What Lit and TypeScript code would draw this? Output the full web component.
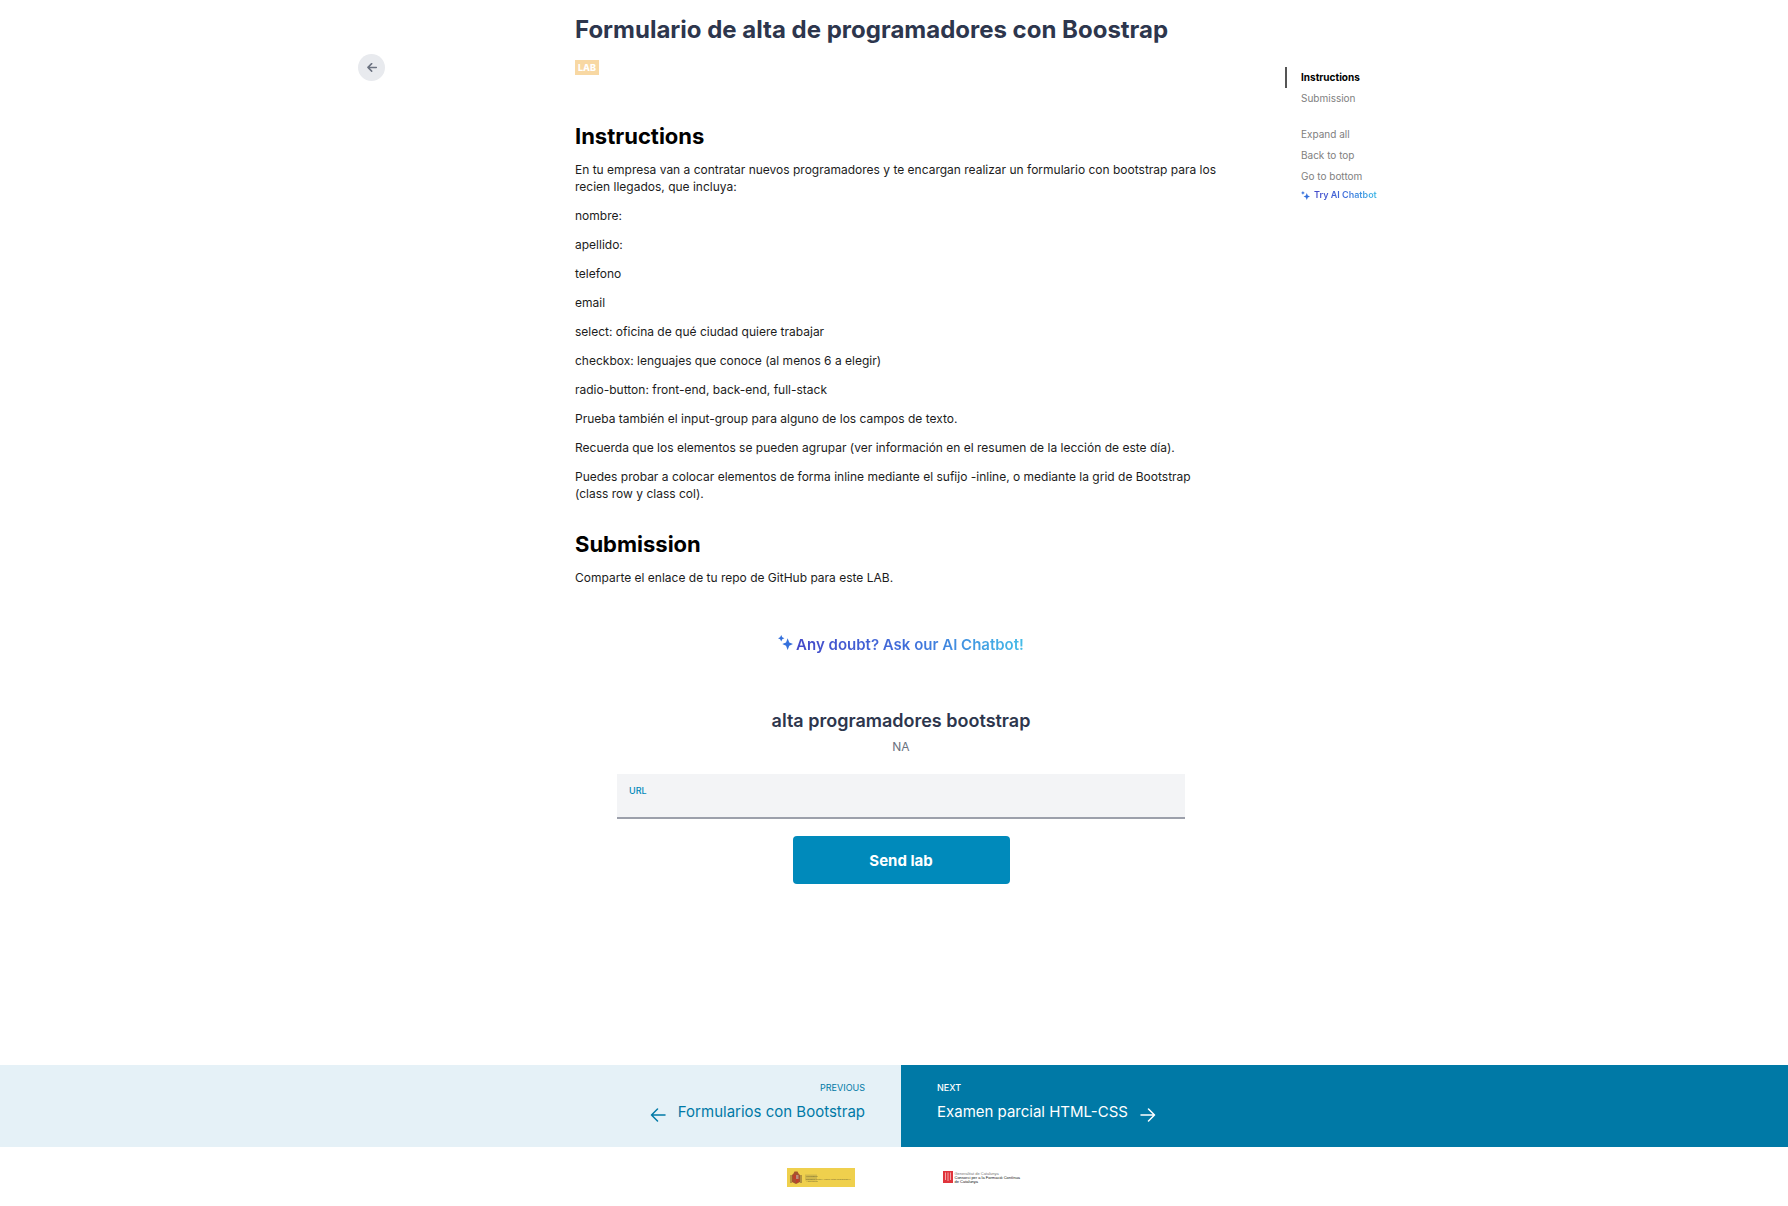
import { LitElement, html, css, svg } from "lit";
import { customElement, state } from "lit/decorators.js";

const TASKS = [
  "En tu empresa van a contratar nuevos programadores y te encargan realizar un formulario con bootstrap para los recien llegados, que incluya:",
  "nombre:",
  "apellido:",
  "telefono",
  "email",
  "select: oficina de qué ciudad quiere trabajar",
  "checkbox: lenguajes que conoce (al menos 6 a elegir)",
  "radio-button: front-end, back-end, full-stack",
  "Prueba también el input-group para alguno de los campos de texto.",
  "Recuerda que los elementos se pueden agrupar (ver información en el resumen de la lección de este día).",
  "Puedes probar a colocar elementos de forma inline mediante el sufijo -inline, o mediante la grid de Bootstrap (class row y class col).",
];

const arrow = (dir: "left" | "right") => html`
  <svg class="arrow" viewBox="0 0 16 16" aria-hidden="true">
    ${dir === "left"
      ? svg`<path d="M15 7H1.5M7.5 1L1.5 7L7.5 13" />`
      : svg`<path d="M1 7H14.5M8.5 1L14.5 7L8.5 13" />`}
  </svg>
`;

const sparkles = html`
  <svg class="sparkles" viewBox="0 0 14 14" aria-hidden="true">
    <path d="M9 3L10.5 7L14 8.5L10.5 10L9 14L7.5 10L4 8.5L7.5 7Z" />
    <path d="M3 0L4 2L6 3L4 4L3 6L2 4L0 3L2 2Z" />
  </svg>
`;

@customElement("app-root")
export class AppRoot extends LitElement {
  @state() private url = "";

  static styles = css`
    :host {
      display: block;
      font-family: Inter, "Liberation Sans", sans-serif;
      font-size: 12px;
      line-height: 17px;
      color: #1c1c1c;
      background: #fff;
    }
    * {
      box-sizing: border-box;
    }
    h1, h2, h3, p {
      margin: 0;
    }
    a {
      color: inherit;
      text-decoration: none;
    }
    button {
      font: inherit;
      border: 0;
      padding: 0;
      background: none;
      color: inherit;
      cursor: pointer;
    }
    .page {
      display: flex;
      flex-direction: column;
      min-height: 100vh;
    }
    .layout {
      flex: 1;
      display: grid;
      grid-template-columns: 1fr minmax(0, 652px) 1fr;
      padding-left: 14px;
    }
    .rail {
      display: flex;
      justify-content: flex-end;
      align-items: flex-start;
      padding: 54px 190px 0 0;
    }
    .back {
      display: grid;
      place-items: center;
      width: 27px;
      height: 27px;
      border-radius: 50%;
      background: #e8eaee;
      color: #6b7280;
    }
    .arrow {
      display: block;
      width: 16px;
      height: 16px;
      fill: none;
      stroke: currentColor;
      stroke-width: 1.5;
      stroke-linecap: round;
      stroke-linejoin: round;
    }
    .back .arrow {
      width: 10px;
      height: 10px;
      stroke-width: 2.4;
    }
    .content {
      display: flex;
      flex-direction: column;
      align-items: flex-start;
      padding-top: 14px;
    }
    h1 {
      font-size: 24px;
      line-height: 32px;
      font-weight: 700;
      color: #2d364d;
    }
    .badge {
      margin-top: 14px;
      padding: 0 3px;
      font-size: 9px;
      line-height: 15px;
      font-weight: 800;
      color: #fff;
      background: #f8d8a3;
    }
    .section {
      display: flex;
      flex-direction: column;
      gap: 12px;
    }
    h2 {
      font-size: 22px;
      line-height: 25px;
      font-weight: 700;
      color: #000;
    }
    .first {
      margin-top: 49px;
    }
    .second {
      margin-top: 30px;
    }
    .ai {
      display: inline-flex;
      align-items: flex-start;
      font-weight: 600;
    }
    .ai-text {
      color: transparent;
      background: linear-gradient(90deg, #4549c9, #3f6fdb 50%, #45bde8);
      background-clip: text;
      -webkit-background-clip: text;
    }
    .sparkles {
      flex: none;
      width: 15px;
      height: 15px;
      fill: #3470dc;
    }
    .ai-large {
      align-self: center;
      gap: 3px;
      margin-top: 49px;
      font-size: 15px;
      line-height: 20px;
    }
    .delivery {
      align-self: stretch;
      display: flex;
      flex-direction: column;
      align-items: center;
      margin-top: 54px;
      padding: 0 42px;
    }
    h3 {
      font-size: 18px;
      line-height: 24px;
      font-weight: 600;
      color: #2d364d;
    }
    .grade {
      margin-top: 5px;
      color: #6b7280;
    }
    .field {
      align-self: stretch;
      display: flex;
      flex-direction: column;
      margin-top: 19px;
      padding: 10px 12px 0;
      background: #f3f4f6;
      border-bottom: 2px solid #9ca0ab;
    }
    .field label {
      font-size: 9px;
      line-height: 13px;
      font-weight: 500;
      color: #0089ba;
    }
    .field input {
      height: 20px;
      padding: 0;
      border: 0;
      outline: 0;
      background: none;
      font: inherit;
      color: inherit;
    }
    .send {
      width: 217px;
      height: 48px;
      margin-top: 17px;
      border-radius: 4px;
      background: #008abb;
      color: #fff;
      font-size: 15px;
      font-weight: 700;
    }
    .toc {
      display: flex;
      flex-direction: column;
      align-items: flex-start;
      padding: 67px 0 0 58px;
      font-size: 10px;
      color: #808080;
    }
    .toc a,
    .toc button {
      padding-left: 16px;
      line-height: 21px;
    }
    .toc .current {
      padding-left: 14px;
      border-left: 2px solid #555;
      font-weight: 700;
      color: #000;
    }
    .actions {
      display: flex;
      flex-direction: column;
      align-items: flex-start;
      margin-top: 15px;
    }
    .toc .ai {
      align-items: center;
      gap: 4px;
      font-size: 9px;
      line-height: 16px;
    }
    .toc .sparkles {
      width: 9px;
      height: 9px;
    }
    .pager {
      display: grid;
      grid-template-columns: calc(50% + 7px) 1fr;
    }
    .step {
      display: flex;
      flex-direction: column;
      gap: 5px;
      padding: 15px 36px 23px;
    }
    .previous {
      align-items: flex-end;
      background: #e5f1f7;
      color: #0079a6;
    }
    .next {
      align-items: flex-start;
      background: #0079a6;
      color: #fff;
    }
    .direction {
      font-size: 9px;
      line-height: 15px;
    }
    .next .direction {
      font-weight: 500;
    }
    .target {
      display: flex;
      align-items: flex-end;
      gap: 12px;
      font-size: 15px;
      line-height: 24px;
    }
    .sponsors {
      display: flex;
      justify-content: center;
      align-items: center;
      gap: 88px;
      height: 59px;
      padding: 2px 0 0 20px;
    }
    .sponsor {
      display: block;
      height: 19px;
      overflow: visible;
      font-family: "Liberation Sans", sans-serif;
    }
    .gov {
      width: 68px;
    }
    .cat {
      width: 78px;
    }
    .tiny {
      font-size: 2px;
    }
    .small {
      font-size: 4px;
    }
  `;

  private renderGov() {
    return html`<svg class="sponsor gov" viewBox="0 0 68 19" role="img" aria-label="Gobierno de España">
      <rect width="68" height="19" fill="#efd04d" />
      <path d="M6.5 5.5L7.5 3.5H10.5L11.5 5.5L13 7V14L9 16L5 14V7Z" fill="#a5522f" />
      <path d="M6.5 7H9V11H6.5ZM9 11H11.5V13.5L9 15Z" fill="#c23a2b" />
      <path d="M9 7H11.5V11H9Z" fill="#b98b7a" />
      <path d="M4 7V15M14 7V15" stroke="#8a6a3a" stroke-width="1.2" />
      <rect x="18" y="6.5" width="12" height="6" fill="#b3a047" opacity=".5" />
      <g fill="#6d6230">
        <text class="tiny" x="19" y="9">MINISTERIO</text>
        <text class="tiny" x="19" y="11.5">DE EDUCACIÓN Y FORMACIÓN PROFESIONAL</text>
        <text class="tiny" x="19" y="14">Y DEPORTE</text>
      </g>
    </svg>`;
  }

  private renderCat() {
    return html`<svg class="sponsor cat" viewBox="0 0 78 19" role="img" aria-label="Generalitat de Catalunya">
      <rect y="3" width="10" height="12" fill="#e0343c" />
      <path d="M2.5 4.5V12M5 4.5V13M7.5 4.5V12" stroke="#f4b4b6" stroke-width=".9" />
      <text class="small" x="11.5" y="6.5" fill="#777">Generalitat de Catalunya</text>
      <g fill="#111">
        <text class="small" x="11.5" y="10.5">Consorci per a la Formació Contínua</text>
        <text class="small" x="11.5" y="14.5">de Catalunya</text>
      </g>
    </svg>`;
  }

  render() {
    return html`
      <div class="page">
        <div class="layout">
          <div class="rail">
            <button class="back" aria-label="Back">${arrow("left")}</button>
          </div>
          <main class="content">
            <h1>Formulario de alta de programadores con Boostrap</h1>
            <span class="badge">LAB</span>
            <section class="section first" id="instructions">
              <h2>Instructions</h2>
              ${TASKS.map((t) => html`<p>${t}</p>`)}
            </section>
            <section class="section second" id="submission">
              <h2>Submission</h2>
              <p>Comparte el enlace de tu repo de GitHub para este LAB.</p>
            </section>
            <button class="ai ai-large">
              ${sparkles}<span class="ai-text">Any doubt? Ask our AI Chatbot!</span>
            </button>
            <form class="delivery" @submit=${(e: Event) => e.preventDefault()}>
              <h3>alta programadores bootstrap</h3>
              <p class="grade">NA</p>
              <div class="field">
                <label for="url">URL</label>
                <input
                  id="url"
                  type="url"
                  .value=${this.url}
                  @input=${(e: Event) => (this.url = (e.target as HTMLInputElement).value)}
                />
              </div>
              <button class="send" type="submit">Send lab</button>
            </form>
          </main>
          <nav class="toc" aria-label="Contents">
            <a class="current" href="#instructions">Instructions</a>
            <a href="#submission">Submission</a>
            <div class="actions">
              <button>Expand all</button>
              <button>Back to top</button>
              <button>Go to bottom</button>
              <button class="ai">${sparkles}<span class="ai-text">Try AI Chatbot</span></button>
            </div>
          </nav>
        </div>
        <nav class="pager" aria-label="Lessons">
          <a class="step previous" href="#previous">
            <span class="direction">PREVIOUS</span>
            <span class="target">${arrow("left")}Formularios con Bootstrap</span>
          </a>
          <a class="step next" href="#next">
            <span class="direction">NEXT</span>
            <span class="target">Examen parcial HTML-CSS${arrow("right")}</span>
          </a>
        </nav>
        <footer class="sponsors">${this.renderGov()}${this.renderCat()}</footer>
      </div>
    `;
  }
}
